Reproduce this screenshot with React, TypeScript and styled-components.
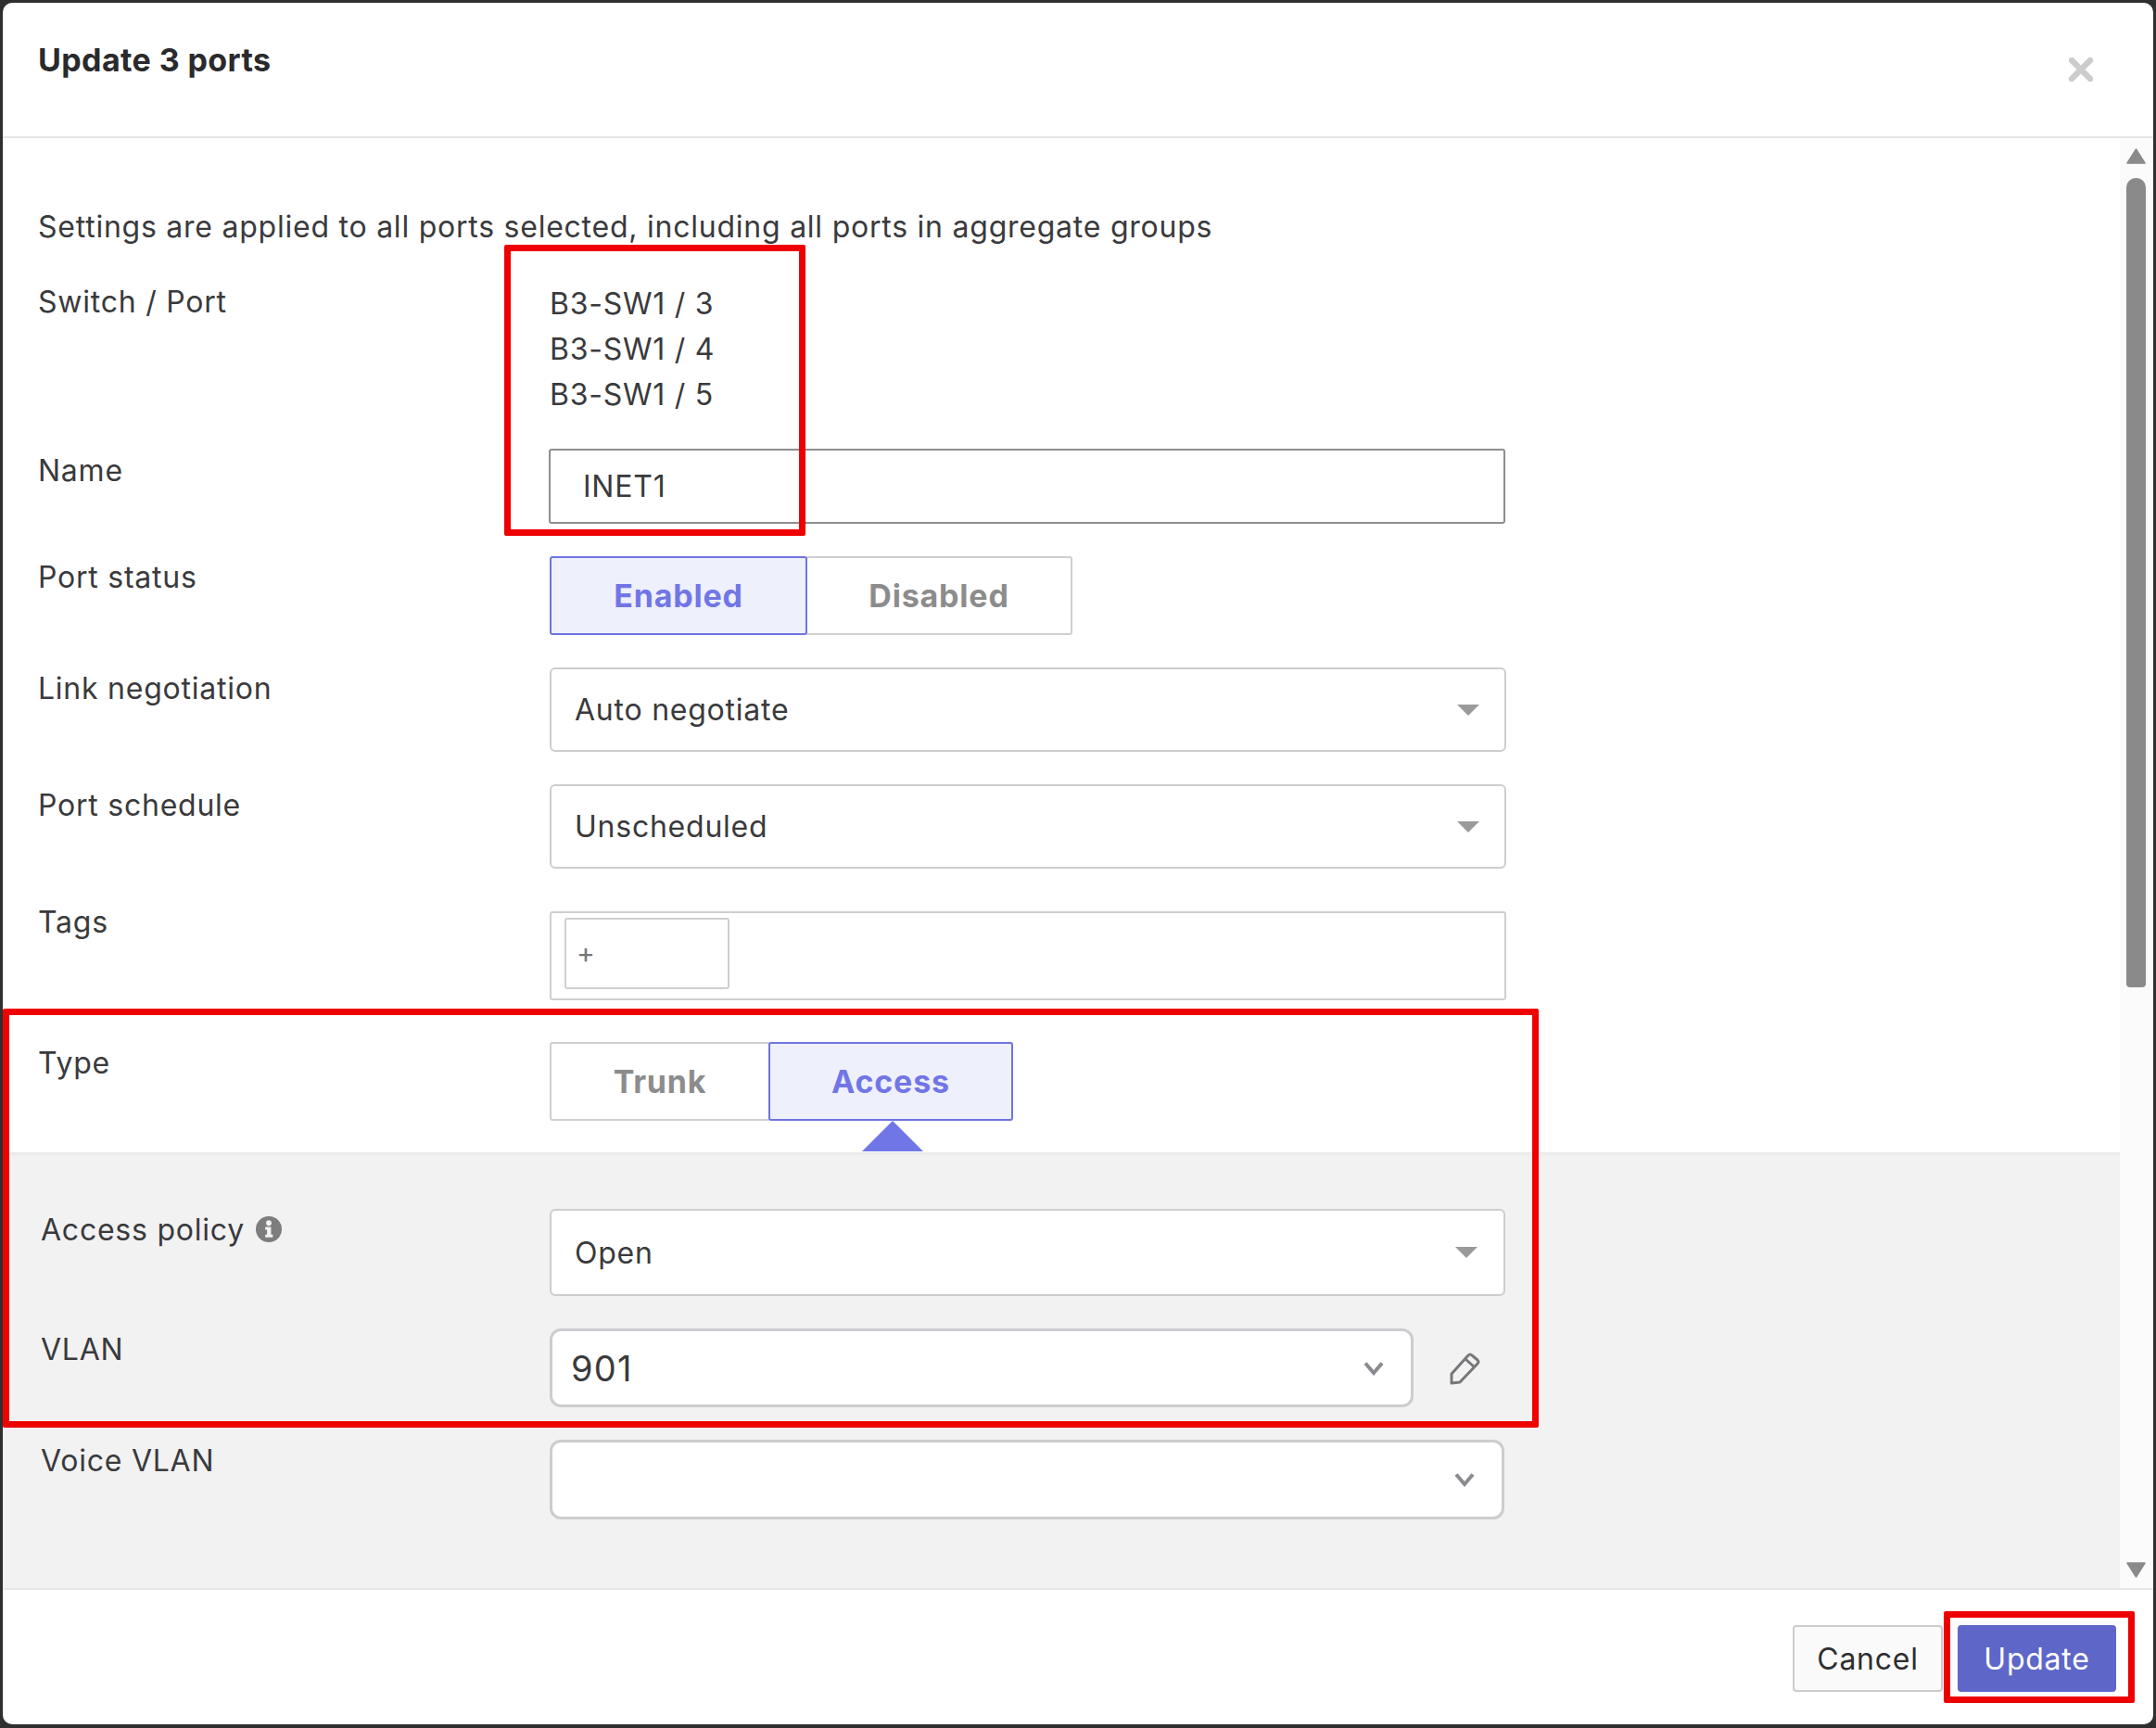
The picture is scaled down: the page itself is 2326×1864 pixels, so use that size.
import React from "react";
import styled, { createGlobalStyle } from "styled-components";

const Global = createGlobalStyle`
  html, body { margin: 0; padding: 0; background: #333; }
  * { box-sizing: border-box; }
`;

const Page = styled.div`
  position: relative;
  width: 2326px;
  height: 1864px;
  background: #2f2f2f;
  font-family: Inter, "Noto Sans", sans-serif;
  font-size: 32px;
  letter-spacing: 0.76px;
  color: #3a3a3c;
  overflow: hidden;
`;

const Dialog = styled.div`
  position: absolute;
  inset: 3px 3px 4px 3px;
  display: flex;
  flex-direction: column;
  background: #fff;
  border-radius: 10px;
  overflow: hidden;
`;

const Header = styled.header`
  flex: none;
  height: 146px;
  display: flex;
  align-items: flex-start;
  justify-content: space-between;
  padding: 40px 65px 0 38px;
  border-bottom: 2px solid #e6e6e6;
`;

const Title = styled.h1`
  margin: 0;
  font-size: 34px;
  letter-spacing: 0.4px;
  line-height: 44px;
  font-weight: 700;
  color: #2a2a2c;
`;

const Close = styled.svg`
  width: 26px;
  height: 26px;
  margin-top: 19px;
`;

const Body = styled.div`
  flex: 1;
  min-height: 0;
  display: flex;
`;

const Scroller = styled.div`
  flex: 1;
  min-width: 0;
  display: flex;
  flex-direction: column;
`;

const WhiteSection = styled.div`
  padding: 73px 0 34px 38px;
`;

const GreySection = styled.div`
  flex: 1;
  background: #f2f2f3;
  box-shadow: inset 0 5px 5px -4px rgba(0, 0, 0, 0.07);
  padding: 61px 0 0 41px;
`;

const Intro = styled.p`
  margin: 0;
  line-height: 46px;
`;

const Row = styled.div<{ $gap: number; $labelWidth?: number }>`
  display: grid;
  grid-template-columns: ${(p) => p.$labelWidth ?? 552}px 1fr;
  margin-top: ${(p) => p.$gap}px;
  position: relative;
`;

const Label = styled.div<{ $nudge?: number }>`
  line-height: 46px;
  margin-top: ${(p) => p.$nudge ?? 0}px;
  display: flex;
  align-items: flex-start;
  gap: 12px;
`;

const PortList = styled.div`
  line-height: 49px;
`;

const NameInput = styled.div`
  width: 1032px;
  height: 81px;
  margin: -1px 0 0 -1px;
  border: 2px solid #8e8e8e;
  border-radius: 3px;
  padding-left: 35px;
  line-height: 77px;
`;

const Toggle = styled.div`
  display: flex;
  height: 85px;
`;

const ToggleOption = styled.div<{ $active?: boolean; $width: number }>`
  position: relative;
  z-index: ${(p) => (p.$active ? 1 : 0)};
  width: ${(p) => p.$width}px;
  display: flex;
  align-items: center;
  justify-content: center;
  font-size: 34px;
  font-weight: 700;
  letter-spacing: 0.8px;
  border: 2px solid ${(p) => (p.$active ? "#6f74e0" : "#cfcfcf")};
  background: ${(p) => (p.$active ? "#eef0fb" : "#fff")};
  color: ${(p) => (p.$active ? "#7176e6" : "#8c8c8c")};
  border-radius: 3px;
  & + & {
    margin-left: -2px;
  }
`;

const SelectBox = styled.div<{ $width?: number; $height: number; $pad?: number; $size?: number }>`
  width: ${(p) => p.$width ?? 1032}px;
  height: ${(p) => p.$height}px;
  background: #fff;
  border: 2px solid #cdcdd0;
  border-radius: 6px;
  display: flex;
  align-items: center;
  justify-content: space-between;
  padding: 0 ${(p) => p.$pad ?? 27}px 0 25px;
  font-size: ${(p) => p.$size ?? 32}px;
`;

const ComboBox = styled(SelectBox)`
  border-width: 3px;
  border-radius: 12px;
  padding-left: 20px;
  letter-spacing: 1.2px;
`;

const Caret = styled.span`
  width: 0;
  height: 0;
  border-left: 12px solid transparent;
  border-right: 12px solid transparent;
  border-top: 12px solid #9a9a9a;
`;

const Chevron = styled.svg`
  width: 24px;
  height: 16px;
`;

const TagsBox = styled.div`
  width: 1032px;
  height: 96px;
  border: 2px solid #cfcfcf;
  border-radius: 3px;
  padding: 5px 0 0 14px;
`;

const TagInput = styled.div`
  width: 178px;
  height: 77px;
  border: 2px solid #cfcfcf;
  border-radius: 3px;
  padding-left: 11px;
  font-size: 30px;
  line-height: 73px;
  color: #777;
`;

const Pointer = styled.span`
  position: absolute;
  left: 889px;
  top: 85px;
  width: 0;
  height: 0;
  border-left: 33px solid transparent;
  border-right: 33px solid transparent;
  border-bottom: 33px solid #7176e6;
`;

const VlanField = styled.div`
  display: flex;
  align-items: center;
  gap: 37px;
`;

const EditIcon = styled.svg`
  width: 36px;
  height: 36px;
`;

const InfoIcon = styled.svg`
  width: 28px;
  height: 28px;
  margin-top: 8px;
`;

const Scrollbar = styled.div`
  flex: none;
  width: 36px;
  background: #fbfbfb;
  padding: 11px 0 11px 7px;
  display: flex;
  flex-direction: column;
`;

const ArrowUp = styled.svg`
  width: 21px;
  height: 17px;
`;

const ArrowDown = styled(ArrowUp)`
  margin-top: auto;
`;

const Thumb = styled.div`
  width: 21px;
  height: 873px;
  margin-top: 15px;
  background: #8a8a8a;
  border-radius: 10px 10px 4px 4px;
`;

const Footer = styled.footer`
  flex: none;
  height: 147px;
  border-top: 2px solid #e6e6e6;
  display: flex;
  justify-content: flex-end;
  gap: 16px;
  padding: 38px 40px 0 0;
`;

const Button = styled.button<{ $primary?: boolean; $width: number }>`
  width: ${(p) => p.$width}px;
  height: 72px;
  padding: 0;
  font-family: inherit;
  font-size: 32px;
  letter-spacing: inherit;
  border-radius: 4px;
  border: 2px solid ${(p) => (p.$primary ? "#5e66c8" : "#cccccc")};
  background: ${(p) => (p.$primary ? "#5e66c8" : "#fafafa")};
  color: ${(p) => (p.$primary ? "#fff" : "#2e2e30")};
`;

const Callout = styled.div<{ $x: number; $y: number; $w: number; $h: number }>`
  position: absolute;
  left: ${(p) => p.$x}px;
  top: ${(p) => p.$y}px;
  width: ${(p) => p.$w}px;
  height: ${(p) => p.$h}px;
  border: 7px solid #ee0000;
  border-radius: 2px;
  pointer-events: none;
`;

const ChevronDown = () => (
  <Chevron viewBox="0 0 24 16">
    <path d="M3 2.5 L12 13 L21 2.5" fill="none" stroke="#8b8b8f" strokeWidth="4" />
  </Chevron>
);

export default function App() {
  return (
    <Page>
      <Global />
      <Dialog>
        <Header>
          <Title>Update 3 ports</Title>
          <Close viewBox="0 0 26 26">
            <path d="M3 3 L23 23 M23 3 L3 23" stroke="#cccccc" strokeWidth="6.5" strokeLinecap="round" />
          </Close>
        </Header>
        <Body>
          <Scroller>
            <WhiteSection>
              <Intro>Settings are applied to all ports selected, including all ports in aggregate groups</Intro>
              <Row $gap={35}>
                <Label>Switch / Port</Label>
                <PortList>
                  <div>B3-SW1 / 3</div>
                  <div>B3-SW1 / 4</div>
                  <div>B3-SW1 / 5</div>
                </PortList>
              </Row>
              <Row $gap={35}>
                <Label>Name</Label>
                <NameInput>INET1</NameInput>
              </Row>
              <Row $gap={35}>
                <Label>Port status</Label>
                <Toggle>
                  <ToggleOption $active $width={278}>Enabled</ToggleOption>
                  <ToggleOption $width={288}>Disabled</ToggleOption>
                </Toggle>
              </Row>
              <Row $gap={35}>
                <Label>Link negotiation</Label>
                <SelectBox $height={91}>
                  Auto negotiate
                  <Caret />
                </SelectBox>
              </Row>
              <Row $gap={35}>
                <Label>Port schedule</Label>
                <SelectBox $height={91}>
                  Unscheduled
                  <Caret />
                </SelectBox>
              </Row>
              <Row $gap={46}>
                <Label $nudge={-11}>Tags</Label>
                <TagsBox>
                  <TagInput>+</TagInput>
                </TagsBox>
              </Row>
              <Row $gap={45}>
                <Label>Type</Label>
                <Toggle>
                  <ToggleOption $width={238}>Trunk</ToggleOption>
                  <ToggleOption $active $width={264}>Access</ToggleOption>
                </Toggle>
                <Pointer />
              </Row>
            </WhiteSection>
            <GreySection>
              <Row $gap={0} $labelWidth={549}>
                <Label>
                  Access policy
                  <InfoIcon viewBox="0 0 29 29">
                    <circle cx="14.5" cy="14.5" r="14.5" fill="#7d7d7d" />
                    <circle cx="14.5" cy="7.5" r="3" fill="#f2f2f3" />
                    <path d="M10.5 12 H17 V20.5 H19 V23.5 H10.5 V20.5 H12.5 V15 H10.5 Z" fill="#f2f2f3" />
                  </InfoIcon>
                </Label>
                <SelectBox $width={1031} $height={94} $pad={28}>
                  Open
                  <Caret />
                </SelectBox>
              </Row>
              <Row $gap={35} $labelWidth={549}>
                <Label>VLAN</Label>
                <VlanField>
                  <ComboBox $width={932} $height={85} $pad={28} $size={38}>
                    901
                    <ChevronDown />
                  </ComboBox>
                  <EditIcon viewBox="0 0 36 36">
                    <path
                      d="M4 24 L22 4 Q24 2 26 4 L32 9 Q34 11 32 13 L13 33 L4 34 Z M19 8 L29 17"
                      fill="none"
                      stroke="#77777b"
                      strokeWidth="3"
                      strokeLinejoin="round"
                    />
                  </EditIcon>
                </VlanField>
              </Row>
              <Row $gap={35} $labelWidth={549}>
                <Label>Voice VLAN</Label>
                <ComboBox $width={1030} $height={86} $pad={28}>
                  <span />
                  <ChevronDown />
                </ComboBox>
              </Row>
            </GreySection>
          </Scroller>
          <Scrollbar>
            <ArrowUp viewBox="0 0 21 17">
              <path d="M10.5 1 L20 16 H1 Z" fill="#8a8a8a" stroke="#8a8a8a" strokeWidth="1.5" strokeLinejoin="round" />
            </ArrowUp>
            <Thumb />
            <ArrowDown viewBox="0 0 21 17">
              <path d="M1 1 H20 L10.5 16 Z" fill="#8a8a8a" stroke="#8a8a8a" strokeWidth="1.5" strokeLinejoin="round" />
            </ArrowDown>
          </Scrollbar>
        </Body>
        <Footer>
          <Button $width={162}>Cancel</Button>
          <Button $primary $width={171}>Update</Button>
        </Footer>
      </Dialog>
      <Callout $x={544} $y={264} $w={325} $h={314} />
      <Callout $x={3} $y={1088} $w={1657} $h={452} />
      <Callout $x={2097} $y={1738} $w={206} $h={99} />
    </Page>
  );
}
